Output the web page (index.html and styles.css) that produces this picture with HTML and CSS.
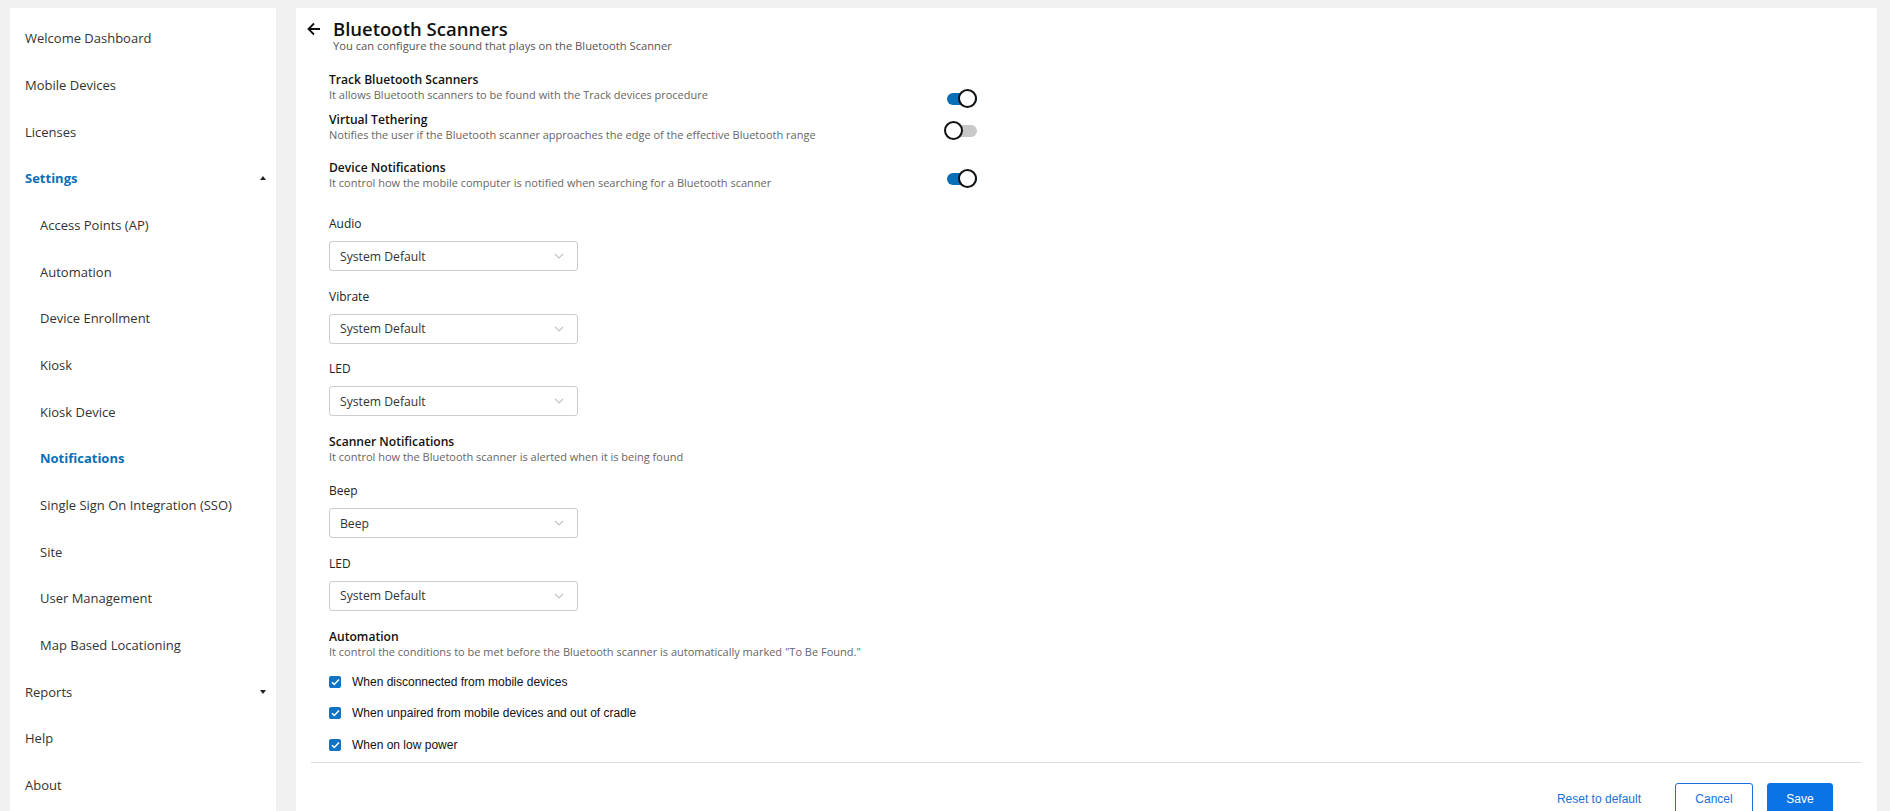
FILE: index.html
```html
<!DOCTYPE html>
<html lang="en">
<head>
    <meta charset="UTF-8">
    <meta name="viewport" content="width=device-width, initial-scale=1.0">
    <title>Settings - Bluetooth Scanners</title>
    <link rel="stylesheet" href="styles.css">
</head>
<body>
    <div class="layout">
        <nav class="sidebar">
            <a class="nav-item">Welcome Dashboard</a>
            <a class="nav-item">Mobile Devices</a>
            <a class="nav-item">Licenses</a>
            <a class="nav-item nav-group is-active">Settings <span class="caret caret-up"></span></a>
            <a class="nav-item nav-sub">Access Points (AP)</a>
            <a class="nav-item nav-sub">Automation</a>
            <a class="nav-item nav-sub">Device Enrollment</a>
            <a class="nav-item nav-sub">Kiosk</a>
            <a class="nav-item nav-sub">Kiosk Device</a>
            <a class="nav-item nav-sub is-active">Notifications</a>
            <a class="nav-item nav-sub">Single Sign On Integration (SSO)</a>
            <a class="nav-item nav-sub">Site</a>
            <a class="nav-item nav-sub">User Management</a>
            <a class="nav-item nav-sub">Map Based Locationing</a>
            <a class="nav-item nav-group">Reports <span class="caret"></span></a>
            <a class="nav-item">Help</a>
            <a class="nav-item">About</a>
        </nav>

        <main class="panel">
            <header class="page-head">
                <button class="back-btn" aria-label="Back">
                    <svg width="14" height="14" viewBox="0 0 14 14" fill="none" stroke="#111" stroke-width="1.8">
                        <path d="M13 7H1.5M7 1.5L1.5 7L7 12.5"/>
                    </svg>
                </button>
                <div>
                    <h1>Bluetooth Scanners</h1>
                    <p class="page-sub">You can configure the sound that plays on the Bluetooth Scanner</p>
                </div>
            </header>

            <div class="form-body">
                <div class="switch-row row-track">
                    <div>
                        <div class="opt-title">Track Bluetooth Scanners</div>
                        <div class="opt-desc">It allows Bluetooth scanners to be found with the Track devices procedure</div>
                    </div>
                    <span class="switch is-on"><span class="knob"></span></span>
                </div>

                <div class="switch-row row-tether">
                    <div>
                        <div class="opt-title">Virtual Tethering</div>
                        <div class="opt-desc">Notifies the user if the Bluetooth scanner approaches the edge of the effective Bluetooth range</div>
                    </div>
                    <span class="switch"><span class="knob"></span></span>
                </div>

                <div class="switch-row row-device">
                    <div>
                        <div class="opt-title">Device Notifications</div>
                        <div class="opt-desc">It control how the mobile computer is notified when searching for a Bluetooth scanner</div>
                    </div>
                    <span class="switch is-on"><span class="knob"></span></span>
                </div>

                <div class="field">
                    <div class="field-label">Audio</div>
                    <div class="select"><span>System Default</span><svg width="10" height="6" viewBox="0 0 10 6" fill="none" stroke="#c4c4c4" stroke-width="1.2"><path d="M1 1l4 4 4-4"/></svg></div>
                </div>
                <div class="field">
                    <div class="field-label">Vibrate</div>
                    <div class="select"><span>System Default</span><svg width="10" height="6" viewBox="0 0 10 6" fill="none" stroke="#c4c4c4" stroke-width="1.2"><path d="M1 1l4 4 4-4"/></svg></div>
                </div>
                <div class="field">
                    <div class="field-label">LED</div>
                    <div class="select"><span>System Default</span><svg width="10" height="6" viewBox="0 0 10 6" fill="none" stroke="#c4c4c4" stroke-width="1.2"><path d="M1 1l4 4 4-4"/></svg></div>
                </div>

                <div class="section">
                    <div class="opt-title">Scanner Notifications</div>
                    <div class="opt-desc">It control how the Bluetooth scanner is alerted when it is being found</div>
                </div>
                <div class="field">
                    <div class="field-label">Beep</div>
                    <div class="select"><span>Beep</span><svg width="10" height="6" viewBox="0 0 10 6" fill="none" stroke="#c4c4c4" stroke-width="1.2"><path d="M1 1l4 4 4-4"/></svg></div>
                </div>
                <div class="field">
                    <div class="field-label">LED</div>
                    <div class="select"><span>System Default</span><svg width="10" height="6" viewBox="0 0 10 6" fill="none" stroke="#c4c4c4" stroke-width="1.2"><path d="M1 1l4 4 4-4"/></svg></div>
                </div>

                <div class="section">
                    <div class="opt-title">Automation</div>
                    <div class="opt-desc">It control the conditions to be met before the Bluetooth scanner is automatically marked "To Be Found."</div>
                </div>
                <div class="checks">
                    <label class="check"><span class="box"><svg width="9" height="8" viewBox="0 0 9 8" fill="none" stroke="#fff" stroke-width="1.5"><path d="M1 4.2l2.3 2.3L8 1.5"/></svg></span>When disconnected from mobile devices</label>
                    <label class="check"><span class="box"><svg width="9" height="8" viewBox="0 0 9 8" fill="none" stroke="#fff" stroke-width="1.5"><path d="M1 4.2l2.3 2.3L8 1.5"/></svg></span>When unpaired from mobile devices and out of cradle</label>
                    <label class="check"><span class="box"><svg width="9" height="8" viewBox="0 0 9 8" fill="none" stroke="#fff" stroke-width="1.5"><path d="M1 4.2l2.3 2.3L8 1.5"/></svg></span>When on low power</label>
                </div>
            </div>

            <footer class="actions">
                <button class="link-btn">Reset to default</button>
                <button class="btn btn-outline">Cancel</button>
                <button class="btn btn-primary">Save</button>
            </footer>
        </main>
    </div>
</body>
</html>
```

FILE: styles.css
```css
* {
    margin: 0;
    padding: 0;
    box-sizing: border-box;
}

body {
    font-family: 'Open Sans', 'Noto Sans', sans-serif;
    background: #f1f1f1;
    color: #222;
}

.layout {
    display: flex;
    gap: 20px;
    padding: 8px 13px 0 10px;
    min-height: 100vh;
}

/* left navigation */
.sidebar {
    width: 266px;
    flex-shrink: 0;
    background: #fff;
    padding: 7px 10px 20px 15px;
}

.nav-item {
    display: flex;
    align-items: center;
    justify-content: space-between;
    height: 46.67px;
    font-size: 13px;
    color: #333;
    cursor: pointer;
}

.nav-sub {
    padding-left: 15px;
}

.nav-item.is-active {
    color: #0b6fb8;
    font-weight: 700;
}

.caret {
    width: 0;
    height: 0;
    border-left: 3.5px solid transparent;
    border-right: 3.5px solid transparent;
    border-top: 4px solid #222;
}

.caret-up {
    border-top: none;
    border-bottom: 4px solid #222;
}

/* main panel */
.panel {
    flex: 1;
    background: #fff;
    display: flex;
    flex-direction: column;
}

.page-head {
    display: flex;
    gap: 12px;
    padding: 10px 0 0 11px;
}

.back-btn {
    background: none;
    border: none;
    height: 22px;
    display: flex;
    align-items: center;
    cursor: pointer;
}

h1 {
    font-size: 18.5px;
    font-weight: 600;
    line-height: 22px;
    color: #111;
}

.page-sub {
    font-size: 11.2px;
    line-height: 14px;
    color: #555;
    margin-top: -1px;
}

.form-body {
    padding: 19px 0 0 33px;
}

.opt-title {
    font-size: 12.1px;
    font-weight: 600;
    line-height: 16px;
    color: #111;
}

.opt-desc {
    font-size: 11px;
    line-height: 14px;
    color: #666;
}

.switch-row {
    display: grid;
    grid-template-columns: 615px 34px;
    align-items: start;
}

.row-track {
    margin-bottom: 4px;
}

.row-track .switch {
    margin-top: 17px;
}

.row-tether {
    margin-bottom: 18px;
}

.switch {
    position: relative;
    display: block;
    width: 34px;
    height: 19px;
    margin-top: 9px;
}

.switch::before {
    content: "";
    position: absolute;
    left: 3px;
    top: 3.5px;
    width: 30px;
    height: 12px;
    border-radius: 6px;
    background: #c8c8c8;
}

.switch.is-on::before {
    background: #0b6fb8;
}

.knob {
    position: absolute;
    left: 0;
    top: 0;
    width: 19px;
    height: 19px;
    border-radius: 50%;
    background: #fff;
    border: 2px solid #111;
}

.switch.is-on .knob {
    left: 14px;
}

/* dropdown fields */
.field {
    margin-top: 26px;
}

.field + .field {
    margin-top: 17.5px;
}

.section + .field {
    margin-top: 19px;
}

.field-label {
    font-size: 12px;
    line-height: 16px;
    color: #222;
    margin-bottom: 9px;
}

.select {
    width: 249px;
    height: 30px;
    border: 1px solid #ccc;
    border-radius: 3px;
    display: flex;
    align-items: center;
    justify-content: space-between;
    padding: 0 13px 0 10px;
    font-size: 12.2px;
    color: #333;
}

.section {
    margin-top: 18px;
}

/* automation checkboxes */
.checks {
    margin-top: 14px;
    display: flex;
    flex-direction: column;
    gap: 13.5px;
    padding-bottom: 8px;
    border-bottom: 1px solid #ddd;
    margin-left: -18px;
    margin-right: 16px;
    padding-left: 18px;
}

.check {
    display: flex;
    align-items: center;
    gap: 11px;
    height: 18px;
    font-family: 'Liberation Sans', Arial, sans-serif;
    font-size: 12px;
    color: #111;
}

.box {
    width: 12px;
    height: 12px;
    border-radius: 2px;
    background: #1272c4;
    display: flex;
    align-items: center;
    justify-content: center;
}

/* footer buttons */
.actions {
    display: flex;
    justify-content: flex-end;
    align-items: center;
    gap: 14px;
    padding: 20px 44px 16px 0;
}

.link-btn {
    background: none;
    border: none;
    font-family: 'Liberation Sans', Arial, sans-serif;
    font-size: 12px;
    color: #1a6fd8;
    margin-right: 20px;
    cursor: pointer;
}

.btn {
    height: 32px;
    border-radius: 3px;
    font-family: 'Liberation Sans', Arial, sans-serif;
    font-size: 12px;
    cursor: pointer;
}

.btn-outline {
    width: 78px;
    background: #fff;
    border: 1px solid #1a6fd8;
    color: #1a6fd8;
}

.btn-primary {
    width: 66px;
    background: #0a73e6;
    border: 1px solid #0a73e6;
    color: #fff;
}
```
